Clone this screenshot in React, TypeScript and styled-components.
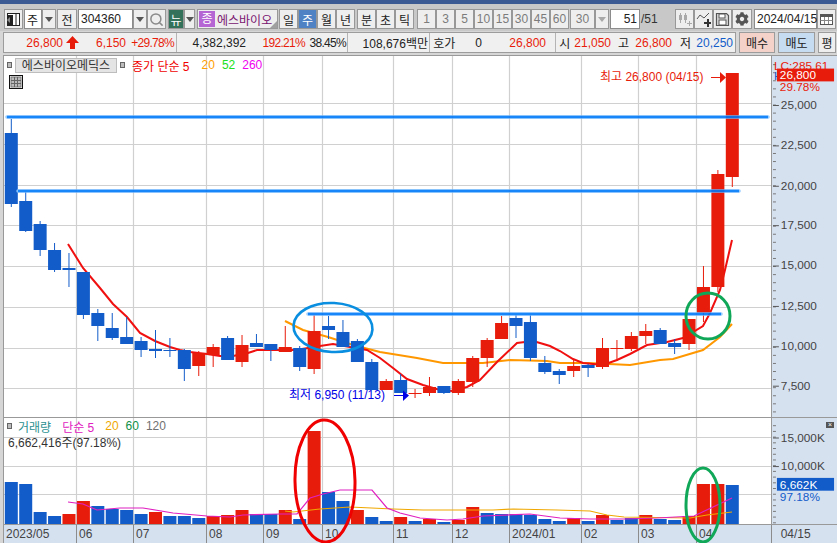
import React, { ReactElement } from 'react';
import styled, { createGlobalStyle } from 'styled-components';
import { Search } from 'lucide-react';
import { FaCog } from 'react-icons/fa';

const RED = '#e81c0a';
const BLUE = '#125cc9';
const FONT = '"Liberation Sans", "Noto Sans CJK KR", sans-serif';

// [wick top, wick bottom, body top, body bottom, up?]
type Candle = [number, number, number, number, number];
const CANDLES: Candle[] = [
    [119, 207, 133, 204, 0], [192, 232, 201, 231, 0], [221, 256, 224, 250, 0], [243, 272, 250, 270, 0],
    [253, 287, 268, 270, 0], [272, 319, 272, 315, 0], [309, 341, 313, 326, 0], [313, 340, 328, 338, 0],
    [317, 344, 337, 344, 0], [337, 357, 341, 350, 0], [330, 358, 349, 351, 0], [338, 357, 350, 351, 0],
    [349, 381, 350, 369, 0], [351, 376, 353, 366, 1], [344, 367, 347, 355, 1], [336, 360, 338, 360, 0],
    [335, 367, 345, 362, 1], [334, 347, 343, 347, 0], [344, 361, 344, 350, 0], [326, 352, 347, 352, 1],
    [346, 371, 348, 367, 0], [315, 374, 331, 369, 1], [316, 339, 326, 330, 0], [320, 347, 332, 347, 0],
    [339, 362, 341, 362, 0], [359, 390, 362, 390, 0], [379, 390, 381, 390, 1], [374, 393, 380, 393, 0],
    [389, 398, 393, 394, 1], [377, 396, 387, 393, 1], [386, 394, 386, 393, 0], [379, 395, 381, 393, 1],
    [356, 387, 358, 382, 1], [338, 367, 340, 358, 1], [316, 339, 323, 339, 1], [315, 338, 318, 326, 0],
    [315, 361, 322, 358, 0], [356, 374, 363, 372, 0], [369, 384, 371, 375, 0], [360, 377, 366, 371, 1],
    [364, 377, 365, 368, 0], [338, 369, 348, 367, 1], [340, 361, 348, 349, 1], [332, 351, 336, 349, 1],
    [324, 344, 331, 336, 1], [328, 344, 330, 344, 0], [339, 354, 343, 347, 0], [319, 350, 319, 344, 1],
    [266, 322, 287, 313, 1], [170, 292, 174, 287, 1], [73, 187, 73, 177, 1],
];

// [top, up?]
const VOLUMES: [number, number][] = [
    [482, 0], [484, 0], [512, 0], [516, 0], [514, 1], [501, 1], [506, 0], [509, 0], [510, 0], [514, 0],
    [512, 1], [516, 0], [516, 0], [518, 0], [516, 1], [515, 1], [510, 1], [514, 0], [514, 0], [510, 1],
    [519, 0], [431, 1], [492, 0], [501, 0], [510, 1], [517, 0], [521, 0], [517, 1], [521, 0], [519, 1],
    [522, 0], [520, 1], [507, 1], [513, 0], [514, 0], [514, 0], [515, 0], [519, 0], [521, 0], [518, 1],
    [521, 0], [515, 1], [520, 0], [518, 0], [515, 1], [519, 0], [520, 0], [516, 1], [484, 1], [484, 1],
    [485, 0],
];

const MA5 =
    '68,244 83,268 100,288 113,304 127,317 140,333 155,341 170,347 180,350 190,352 207,354 220,356 233,356 248,353 257,350 277,350 296,350 308,348 320,346 333,344 350,347 367,350 380,358 393,368 407,379 423,385 440,390 452,391 467,387 480,380 497,362 517,343 533,341 540,343 550,346 560,351 573,359 583,363 603,365 617,360 630,354 647,345 667,342 683,338 703,326 710,313 720,290 725,270 732,240';
const MA20 =
    '285,321 303,330 328,337 353,345 380,352 417,358 443,363 483,363 510,360 547,361 560,363 588,363 630,365 660,360 673,359 703,350 720,337 732,324';
const VOL5 =
    '68,502 83,504 97,510 120,508 143,508 173,513 207,516 230,517 243,515 280,514 297,514 310,498 323,494 340,490 372,490 387,508 400,513 420,518 447,520 463,519 483,516 530,514 560,518 590,519 624,519 657,518 694,516 732,498';
const VOL20 =
    '285,511 293,512 320,509 350,507 393,509 423,510 493,510 513,509 557,510 590,511 607,515 624,517 690,518 707,515 732,512';

const GRID_X = [76, 133, 206, 263, 322, 393, 452, 509, 581, 638, 696];
const GRID_Y = [103, 144, 185, 225, 266, 307, 348, 388];
const PRICE_LABELS = ['25,000', '22,500', '20,000', '17,500', '15,000', '12,500', '10,000', '7,500'];
const MONTHS: [string, number][] = [
    ['2023/05', 72], ['06', 57], ['07', 73], ['08', 57], ['09', 59], ['10', 71],
    ['11', 59], ['12', 57], ['2024/01', 72], ['02', 57], ['03', 58], ['04', 75],
];

const candleX = (i: number): number => 11.3 + 14.42 * i;

const GlobalStyle = createGlobalStyle`
    html, body {
        margin: 0;
        padding: 0;
        background: #d9d9d9;
    }
    * {
        box-sizing: border-box;
    }
`;

const Page = styled.div`
    width: 837px;
    height: 543px;
    overflow: hidden;
    background: #d6d6d6;
    font-family: ${FONT};
    font-size: 12px;
    color: #222;
`;

const TitleStrip = styled.div`
    height: 4px;
    background: #3b5a94;
`;

const Toolbar = styled.div`
    height: 27px;
    padding: 5px 0 0 4px;
    display: flex;
    align-items: flex-start;
    background: #c8c8c8;
`;

const Group = styled.div<{ $ml?: number }>`
    display: flex;
    flex: none;
    margin-left: ${({ $ml }): number => $ml || 0}px;
`;

const Btn = styled.div<{ $w: number; $active?: boolean; $muted?: boolean }>`
    width: ${({ $w }): number => $w}px;
    height: 20px;
    flex: none;
    display: flex;
    align-items: center;
    justify-content: center;
    border: 1px solid #989898;
    background: ${({ $active }): string => ($active ? '#4f82c4' : '#eeeeee')};
    color: ${({ $active, $muted }): string => ($active ? '#fff' : $muted ? '#7c7c7c' : '#222')};
`;

const Arrow = styled(Btn)`
    &::after {
        content: '';
        border-left: 4px solid transparent;
        border-right: 4px solid transparent;
        border-top: 5px solid ${({ $muted }): string => ($muted ? '#a8a8a8' : '#555')};
    }
`;

const Field = styled.div<{ $w: number; $right?: boolean }>`
    width: ${({ $w }): number => $w}px;
    height: 20px;
    flex: none;
    padding: 0 2px;
    display: flex;
    align-items: center;
    justify-content: ${({ $right }): string => ($right ? 'flex-end' : 'flex-start')};
    border: 1px solid #8c8c8c;
    background: #fff;
`;

const NewsBadge = styled(Btn)`
    background: #34715a;
    color: #fff;
`;

const NameCombo = styled.div`
    position: relative;
    width: 81px;
    height: 20px;
    padding: 1px;
    display: flex;
    align-items: center;
    gap: 2px;
    border: 1px solid #989898;
    background: #eeeeee;
    color: #7a1470;
    white-space: nowrap;
    overflow: hidden;
    &::after {
        content: '';
        position: absolute;
        right: 0;
        bottom: 0;
        border-left: 7px solid transparent;
        border-bottom: 7px solid #a0a0a0;
    }
`;

const PurpleTag = styled.span`
    width: 16px;
    height: 16px;
    flex: none;
    text-align: center;
    line-height: 16px;
    background: #b565d4;
    color: #fff;
`;

const PageCount = styled.span`
    width: 24px;
    padding-left: 1px;
    line-height: 20px;
    color: #333;
`;

const InfoRow = styled.div`
    height: 21px;
    margin: 1px 0 0 3px;
    display: flex;
`;

const Info = styled.div`
    width: 733px;
    display: flex;
    flex: none;
    border: 1px solid #9c9c9c;
    background: #f0f0f0;
`;

const Seg = styled.div<{ $w: number }>`
    width: ${({ $w }): number => $w}px;
    flex: none;
    display: flex;
    align-items: center;
    border-right: 1px solid #b4b4b4;
    &:last-child {
        border-right: 0;
    }
`;

const Val = styled.span<{ $w: number; $c?: string; $left?: boolean; $tight?: boolean }>`
    width: ${({ $w }): number => $w}px;
    flex: none;
    white-space: nowrap;
    text-align: ${({ $left }): string => ($left ? 'left' : 'right')};
    letter-spacing: ${({ $tight }): string => ($tight ? '-0.7px' : '0')};
    color: ${({ $c }): string => $c || '#222'};
`;

const UpMark = styled.svg`
    width: 13px;
    height: 13px;
    margin-left: 3px;
    flex: none;
`;

const TradeBtn = styled.div<{ $w: number; $ml: number; $bg: string }>`
    width: ${({ $w }): number => $w}px;
    margin-left: ${({ $ml }): number => $ml}px;
    flex: none;
    display: flex;
    align-items: center;
    justify-content: center;
    border: 1px solid #9c9c9c;
    background: ${({ $bg }): string => $bg};
`;

const Chart = styled.div`
    height: 488px;
    margin: 2px 0 0 3px;
    border-left: 1px solid #999;
    border-top: 1px solid #999;
    background: #fff;
`;

const PanelRow = styled.div<{ $h: number; $line?: boolean }>`
    position: relative;
    height: ${({ $h }): number => $h}px;
    display: flex;
    border-bottom: ${({ $line }): string => ($line ? '1px solid #999' : '0')};
`;

const Plot = styled.svg`
    width: 767px;
    height: 100%;
    flex: none;
    overflow: visible;
    position: relative;
    z-index: 1;
    font-family: ${FONT};
    font-size: 12px;
`;

const Scale = styled.svg`
    width: 66px;
    height: 100%;
    flex: none;
    background: #d6e1f0;
    border-left: 1px solid #999;
    font-family: ${FONT};
    font-size: 12px;
`;

const Legend = styled.div<{ $top: number }>`
    position: absolute;
    left: 3px;
    top: ${({ $top }): number => $top}px;
    z-index: 2;
    display: flex;
    align-items: center;
    height: 16px;
    white-space: nowrap;
`;

const Dot = styled.span`
    width: 5px;
    height: 6px;
    flex: none;
    border: 1px solid #666;
    background: #bdbdbd;
`;

const NameChip = styled.span`
    width: 102px;
    height: 15px;
    margin: 0 3px;
    flex: none;
    text-align: center;
    line-height: 14px;
    background: #e4e4e4;
    border: 1px solid #bdbdbd;
    color: #333;
`;

const LegendText = styled.span<{ $c: string; $ml: number }>`
    margin-left: ${({ $ml }): number => $ml}px;
    color: ${({ $c }): string => $c};
`;

const TableIcon = styled.svg`
    position: absolute;
    left: 5px;
    top: 19px;
    z-index: 2;
    width: 14px;
    height: 14px;
`;

const VolumeInfo = styled.div`
    position: absolute;
    left: 4px;
    top: 15px;
    z-index: 2;
    color: #333;
    white-space: nowrap;
`;

const CloseBox = styled.span`
    position: absolute;
    right: 3px;
    top: 4px;
    z-index: 2;
    width: 8px;
    height: 6px;
    background: #555;
    color: #fff;
    font-size: 7px;
    line-height: 6px;
    text-align: center;
`;

const DateAxis = styled.div`
    height: 18px;
    display: flex;
    background: #d6e1f0;
    color: #444;
`;

const DateCell = styled.div<{ $w: number; $first?: boolean }>`
    width: ${({ $w }): number => $w}px;
    flex: none;
    padding-left: 2px;
    line-height: 18px;
    border-left: ${({ $first }): string => ($first ? '0' : '1px solid #8c8c8c')};
`;

const ToolIcon = ({ children }: { children: React.ReactNode }): ReactElement => (
    <svg width="15" height="15" viewBox="0 0 15 15">
        {children}
    </svg>
);

const PriceScale = (): ReactElement => {
    const minor = Array.from({ length: 44 }, (_, i) => 62 + i * 8.2);
    return (
        <Scale viewBox="771 56 66 361">
            {minor.map((y) => (
                <line key={y} x1="772" x2="775" y1={y} y2={y} stroke="#777" />
            ))}
            {GRID_Y.map((y, i) => (
                <g key={y}>
                    <line x1="772" x2="778" y1={y + 0.5} y2={y + 0.5} stroke="#555" />
                    <text x="780" y={y + 4} fill="#444">
                        {PRICE_LABELS[i]}
                    </text>
                </g>
            ))}
            <text x="773" y="67" fill="#e81c0a">LC:285.61</text>
            <text x="773" y="78" fill="#125cc9">H</text>
            <rect x="776" y="66" width="58" height="13" fill={RED} />
            <text x="779" y="77" fill="#fff">26,800</text>
            <text x="779" y="89" fill="#e81c0a">29.78%</text>
        </Scale>
    );
};

const VolumeScale = (): ReactElement => {
    const minor = Array.from({ length: 18 }, (_, i) => 425 + i * 5.8);
    return (
        <Scale viewBox="771 418 66 106">
            {minor.map((y) => (
                <line key={y} x1="772" x2="775" y1={y} y2={y} stroke="#777" />
            ))}
            <line x1="772" x2="778" y1="437.5" y2="437.5" stroke="#555" />
            <text x="780" y="442" fill="#444">15,000K</text>
            <line x1="772" x2="778" y1="466.5" y2="466.5" stroke="#555" />
            <text x="780" y="470" fill="#444">10,000K</text>
            <rect x="776" y="478" width="58" height="13" fill={BLUE} />
            <text x="779" y="489" fill="#fff">6,662K</text>
            <text x="779" y="501" fill="#125cc9">97.18%</text>
        </Scale>
    );
};

const PricePlot = (): ReactElement => (
    <Plot viewBox="4 56 767 361">
        {GRID_X.map((x) => (
            <line key={x} x1={x + 0.5} x2={x + 0.5} y1="56" y2="417" stroke="#d0d0d0" strokeWidth="1.2" />
        ))}
        {GRID_Y.map((y) => (
            <line key={y} x1="4" x2="771" y1={y + 0.5} y2={y + 0.5} stroke="#d0d0d0" strokeWidth="1.2" />
        ))}
        <polyline points={MA20} fill="none" stroke="#ff9800" strokeWidth="2" />
        <polyline points={MA5} fill="none" stroke="#f01010" strokeWidth="2" />
        {CANDLES.map(([wt, wb, bt, bb, up], i) => {
            const x = candleX(i);
            const c = up ? RED : BLUE;
            return (
                <g key={i}>
                    <line x1={x} x2={x} y1={wt} y2={wb} stroke={c} />
                    <rect x={x - 6.5} y={bt} width="13" height={Math.max(bb - bt, 1)} fill={c} />
                </g>
            );
        })}
        {[
            [7, 768, 117],
            [18, 739, 191],
            [308, 721, 314],
        ].map(([a, b, y]) => (
            <g key={y} opacity="0.9">
                <line x1={a} x2={b} y1={y} y2={y} stroke="#8cc8ff" strokeWidth="3.6" strokeLinecap="round" />
                <line x1={a} x2={b} y1={y} y2={y} stroke="#0078f8" strokeWidth="2.6" />
            </g>
        ))}
        <ellipse cx="333" cy="327.5" rx="39.5" ry="24.5" transform="rotate(3 333 327.5)" fill="none" stroke="#0a8fe0" strokeWidth="2.6" />
        <ellipse cx="708" cy="316" rx="22" ry="23" fill="none" stroke="#10a858" strokeWidth="3" />
        <text x="600" y="81" fill="#e81c0a">최고 26,800 (04/15)</text>
        <line x1="711" x2="721" y1="77.5" y2="77.5" stroke="#e81c0a" />
        <polygon points="720,72 726,77.5 720,83" fill="#e81c0a" />
        <text x="289" y="399" fill="#0000e6">최저 6,950 (11/13)</text>
        <line x1="394" x2="404" y1="395.5" y2="395.5" stroke="#0000e6" />
        <polygon points="403,390.5 409,395.5 403,401" fill="#0000e6" />
    </Plot>
);

const VolumePlot = (): ReactElement => (
    <Plot viewBox="4 418 767 106">
        {GRID_X.map((x) => (
            <line key={x} x1={x + 0.5} x2={x + 0.5} y1="418" y2="524" stroke="#d0d0d0" strokeWidth="1.2" />
        ))}
        {[437, 466, 494].map((y) => (
            <line key={y} x1="4" x2="771" y1={y + 0.5} y2={y + 0.5} stroke="#d0d0d0" strokeWidth="1.2" />
        ))}
        {VOLUMES.map(([top, up], i) => (
            <rect key={i} x={candleX(i) - 6.5} y={top} width="13" height={524 - top} fill={up ? RED : BLUE} />
        ))}
        <polyline points={VOL20} fill="none" stroke="#f0a800" strokeWidth="1.2" />
        <polyline points={VOL5} fill="none" stroke="#e020c0" strokeWidth="1.2" />
        <ellipse cx="325" cy="481" rx="30" ry="61" transform="rotate(-1 325 481)" fill="none" stroke="#f00000" strokeWidth="3" />
        <ellipse cx="703" cy="505" rx="17" ry="37" fill="none" stroke="#10a858" strokeWidth="3" />
    </Plot>
);

const App = (): ReactElement => {
    return (
        <Page>
            <GlobalStyle />
            <TitleStrip />
            <Toolbar>
                <Btn $w={19}>
                    <ToolIcon>
                        <rect x="1.5" y="1.5" width="12" height="12" fill="#fff" stroke="#222" />
                        <rect x="1" y="3" width="6" height="10" fill="#222" />
                        <line x1="10" x2="10" y1="2" y2="13" stroke="#222" />
                        <polygon points="1,8 4,5 4,11" fill="#888" />
                    </ToolIcon>
                </Btn>
                <Group $ml={1}>
                    <Field $w={18}>주</Field>
                    <Arrow $w={14} />
                </Group>
                <Group $ml={1}>
                    <Btn $w={20}>전</Btn>
                </Group>
                <Group $ml={1}>
                    <Field $w={55}>304360</Field>
                    <Arrow $w={14} />
                    <Btn $w={19}>
                        <Search size={15} color="#8a8a8a" strokeWidth={2.4} />
                    </Btn>
                </Group>
                <Group $ml={2}>
                    <NewsBadge $w={16}>뉴</NewsBadge>
                    <Arrow $w={11} />
                </Group>
                <Group $ml={2}>
                    <NameCombo>
                        <PurpleTag>종</PurpleTag>
                        에스바이오
                    </NameCombo>
                </Group>
                <Group $ml={1}>
                    <Btn $w={19}>일</Btn>
                    <Btn $w={19} $active>주</Btn>
                    <Btn $w={19}>월</Btn>
                    <Btn $w={19}>년</Btn>
                </Group>
                <Group $ml={2}>
                    <Btn $w={19}>분</Btn>
                    <Btn $w={19}>초</Btn>
                    <Btn $w={19}>틱</Btn>
                </Group>
                <Group $ml={3}>
                    {['1', '3', '5', '10', '15', '30', '45', '60'].map((n) => (
                        <Btn key={n} $w={19} $muted>{n}</Btn>
                    ))}
                </Group>
                <Group $ml={1}>
                    <Btn $w={25} $muted>30</Btn>
                    <Arrow $w={14} $muted />
                </Group>
                <Group $ml={1}>
                    <Field $w={30} $right>51</Field>
                    <PageCount>/51</PageCount>
                </Group>
                <Group $ml={11}>
                    <Btn $w={19}>
                        <ToolIcon>
                            <g fill="#a9a9a9">
                                <rect x="2" y="3" width="3" height="5" />
                                <rect x="7" y="3" width="3" height="5" />
                                <rect x="3" y="1" width="1" height="10" />
                                <rect x="8" y="1" width="1" height="10" />
                                <path d="M10 11h2V9h1v2h2v1h-2v2h-1v-2h-2z" />
                            </g>
                        </ToolIcon>
                    </Btn>
                    <Btn $w={19}>
                        <ToolIcon>
                            <polyline points="1,7 4,3 8,6 13,1" fill="none" stroke="#555" />
                            <path d="M8 10h3V7h2v3h2v2h-2v3h-2v-3H8z" fill="#333" />
                        </ToolIcon>
                    </Btn>
                    <Btn $w={19}>
                        <ToolIcon>
                            <path d="M1.5 1.5h10l2 2v10h-12z" fill="#ddd" stroke="#555" strokeWidth="1.2" />
                            <rect x="4" y="2" width="6" height="4" fill="#fff" stroke="#555" />
                            <rect x="4" y="8" width="7" height="5" fill="#fff" stroke="#555" />
                        </ToolIcon>
                    </Btn>
                    <Btn $w={20}>
                        <FaCog size={14} color="#555" />
                    </Btn>
                </Group>
                <Group $ml={2}>
                    <Field $w={63}>2024/04/15</Field>
                    <Btn $w={19}>
                        <ToolIcon>
                            <rect x="1.5" y="2.5" width="12" height="10" fill="#fff" stroke="#555" />
                            <rect x="1" y="2" width="13" height="3" fill="#555" />
                            <path d="M1.5 8.5h12M5.5 5v7M9.5 5v7" stroke="#888" fill="none" />
                        </ToolIcon>
                    </Btn>
                </Group>
            </Toolbar>
            <InfoRow>
                <Info>
                    <Seg $w={173}>
                        <Val $w={59} $c={RED}>26,800</Val>
                        <UpMark viewBox="0 0 13 13">
                            <polygon points="6.5,0 13,7 9,7 9,13 4,13 4,7 0,7" fill={RED} />
                        </UpMark>
                        <Val $w={47} $c={RED}>6,150</Val>
                        <Val $w={48} $c={RED} $tight>+29.78%</Val>
                    </Seg>
                    <Seg $w={171}>
                        <Val $w={69}>4,382,392</Val>
                        <Val $w={59} $c={RED} $tight>192.21%</Val>
                        <Val $w={41} $tight>38.45%</Val>
                    </Seg>
                    <Seg $w={82}>
                        <Val $w={80}>108,676백만</Val>
                    </Seg>
                    <Seg $w={126}>
                        <Val $w={29} $left>&nbsp;호가</Val>
                        <Val $w={23}>0</Val>
                        <Val $w={64} $c={RED}>26,800</Val>
                    </Seg>
                    <Seg $w={179}>
                        <Val $w={18} $left>&nbsp;시</Val>
                        <Val $w={37} $c={RED}>21,050</Val>
                        <Val $w={18}>고</Val>
                        <Val $w={43} $c={RED}>26,800</Val>
                        <Val $w={19}>저</Val>
                        <Val $w={42} $c={BLUE}>20,250</Val>
                    </Seg>
                </Info>
                <TradeBtn $w={36} $ml={3} $bg="#f4d2ca">매수</TradeBtn>
                <TradeBtn $w={37} $ml={3} $bg="#c6dcf0">매도</TradeBtn>
                <TradeBtn $w={18} $ml={3} $bg="#eeeeee">평</TradeBtn>
            </InfoRow>
            <Chart>
                <PanelRow $h={362} $line>
                    <PricePlot />
                    <PriceScale />
                    <Legend $top={1}>
                        <Dot />
                        <NameChip>에스바이오메딕스</NameChip>
                        <Dot />
                        <LegendText $c="#f00000" $ml={7}>종가 단순 5</LegendText>
                        <LegendText $c="#ffa000" $ml={12}>20</LegendText>
                        <LegendText $c="#20e020" $ml={7}>52</LegendText>
                        <LegendText $c="#f000f0" $ml={7}>260</LegendText>
                    </Legend>
                    <TableIcon viewBox="0 0 14 14">
                        <rect x="0.5" y="0.5" width="13" height="13" fill="#fff" stroke="#111" />
                        <rect x="2" y="2" width="10" height="10" fill="#bbb" stroke="#777" />
                        <path d="M5.5 2v10M8.5 2v10M2 5.5h10M2 8.5h10" stroke="#666" fill="none" />
                    </TableIcon>
                </PanelRow>
                <PanelRow $h={107} $line>
                    <VolumePlot />
                    <VolumeScale />
                    <Legend $top={0}>
                        <Dot />
                        <LegendText $c="#2a9090" $ml={6}>거래량</LegendText>
                        <LegendText $c="#e020c0" $ml={11}>단순 5</LegendText>
                        <LegendText $c="#f0a800" $ml={11}>20</LegendText>
                        <LegendText $c="#109048" $ml={7}>60</LegendText>
                        <LegendText $c="#707070" $ml={7}>120</LegendText>
                    </Legend>
                    <VolumeInfo>6,662,416주(97.18%)</VolumeInfo>
                    <CloseBox>×</CloseBox>
                </PanelRow>
                <DateAxis>
                    {MONTHS.map(([label, w], i) => (
                        <DateCell key={label} $w={w} $first={i === 0}>
                            {label}
                        </DateCell>
                    ))}
                    <DateCell $w={66}>&nbsp;&nbsp;04/15</DateCell>
                </DateAxis>
            </Chart>
        </Page>
    );
};

export default App;
